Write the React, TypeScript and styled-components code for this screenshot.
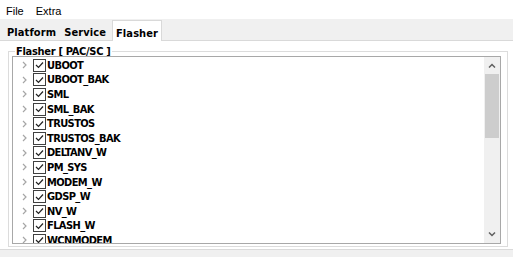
import styled, { createGlobalStyle } from "styled-components";

const Global = createGlobalStyle`
  html, body { margin: 0; padding: 0; background: #ffffff; }
  body { font-family: "DejaVu Sans", "Liberation Sans", sans-serif; color: #000; }
`

const Window = styled.div`
  width: 513px;
  height: 257px;
  overflow: hidden;
  display: flex;
  flex-direction: column;
  background: #f0f0f0;
`
const MenuBar = styled.div`
  height: 19px;
  box-sizing: border-box;
  padding: 3px 0 0 6px;
  display: flex;
  align-items: center;
  gap: 12px;
  background: #ffffff;
  font-family: "Liberation Sans", sans-serif;
  font-size: 11px;
`
const TabStrip = styled.div`
  height: 21px;
  display: flex;
  align-items: flex-end;
  padding-left: 3px;
  background: #f0f0f0;
`
const Tab = styled.div<{ active?: boolean }>`
  height: ${p => (p.active ? "21px" : "19px")};
  box-sizing: border-box;
  padding: ${p => (p.active ? "4px" : "2px")} 3px 0;
  display: flex;
  align-items: center;
  font-family: "DejaVu Sans Condensed", "DejaVu Sans", sans-serif;
  font-weight: bold;
  font-size: 11px;
  letter-spacing: 0.1px;
  background: ${p => (p.active ? "#ffffff" : "#f0f0f0")};
  border: 1px solid ${p => (p.active ? "#d9d9d9" : "transparent")};
  border-bottom: none;
  margin-bottom: ${p => (p.active ? "-1px" : "0")};
  margin-left: ${p => (p.active ? "2px" : "0")};
  position: relative;
`
const Panel = styled.div`
  height: 209px;
  box-sizing: border-box;
  background: #ffffff;
  border-top: 1px solid #d9d9d9;
  padding: 6px 5px 2px 8px;
  display: flex;
`
const Group = styled.fieldset`
  flex: 1;
  margin: 0;
  padding: 0 6px 2px 3px;
  border: 1px solid #dcdcdc;
  display: flex;
  min-width: 0;
`
const Legend = styled.legend`
  padding: 0 1px;
  margin-left: 3px;
  font-family: "DejaVu Sans Condensed", "DejaVu Sans", sans-serif;
  font-weight: bold;
  font-size: 11px;
  letter-spacing: -0.3px;
  line-height: 9px;
`
const ListBox = styled.div`
  flex: 1;
  display: flex;
  border: 1px solid #a8a8a8;
  background: #ffffff;
  overflow: hidden;
`
const Items = styled.div`
  flex: 1;
  padding: 1px 0 0 7px;
  overflow: hidden;
`
const Row = styled.div`
  height: 14.6px;
  display: flex;
  align-items: center;
  gap: 4px;
`
const Arrow = styled.span`
  width: 8px;
  display: flex;
  justify-content: center;
`
const Check = styled.span`
  width: 11px;
  height: 11px;
  border: 1px solid #404040;
  display: flex;
  align-items: center;
  justify-content: center;
  margin-left: 1px;
  margin-right: -3px;
`
const Label = styled.span`
  font-family: "DejaVu Sans Condensed", "DejaVu Sans", sans-serif;
  font-weight: bold;
  font-size: 11px;
  letter-spacing: -0.6px;
`
const ScrollBar = styled.div`
  width: 16px;
  background: #f0f0f0;
  display: flex;
  flex-direction: column;
  align-items: center;
`
const ScrollBtn = styled.div`
  height: 17px;
  width: 16px;
  display: flex;
  align-items: center;
  justify-content: center;
`
const Thumb = styled.div`
  width: 14px;
  height: 64px;
  background: #cdcdcd;
`
const Spacer = styled.div`
  flex: 1;
`
const StatusBar = styled.div`
  flex: 1;
  background: #f0f0f0;
  border-top: 1px solid #dadada;
`

const items = [
  "UBOOT", "UBOOT_BAK", "SML", "SML_BAK", "TRUSTOS", "TRUSTOS_BAK",
  "DELTANV_W", "PM_SYS", "MODEM_W", "GDSP_W", "NV_W", "FLASH_W", "WCNMODEM",
]

export default function App() {
  return (
    <Window>
      <Global />
      <MenuBar>
        <span>File</span>
        <span>Extra</span>
      </MenuBar>
      <TabStrip>
        <Tab>Platform</Tab>
        <Tab>Service</Tab>
        <Tab active>Flasher</Tab>
      </TabStrip>
      <Panel>
        <Group>
          <Legend>Flasher [ PAC/SC ]</Legend>
          <ListBox>
            <Items>
              {items.map(name => (
                <Row key={name}>
                  <Arrow>
                    <svg width="5" height="8" viewBox="0 0 5 8">
                      <path d="M1 1 L4 4 L1 7" fill="none" stroke="#a6a6a6" strokeWidth="1.2" />
                    </svg>
                  </Arrow>
                  <Check>
                    <svg width="9" height="8" viewBox="0 0 9 8">
                      <path d="M1 4 L3.5 6.5 L8 1.5" fill="none" stroke="#222" strokeWidth="1.2" />
                    </svg>
                  </Check>
                  <Label>{name}</Label>
                </Row>
              ))}
            </Items>
            <ScrollBar>
              <ScrollBtn>
                <svg width="8" height="5" viewBox="0 0 8 5">
                  <path d="M1 4.5 L4 1.5 L7 4.5" fill="none" stroke="#606060" strokeWidth="1.5" />
                </svg>
              </ScrollBtn>
              <Thumb />
              <Spacer />
              <ScrollBtn>
                <svg width="8" height="5" viewBox="0 0 8 5">
                  <path d="M1 0.5 L4 3.5 L7 0.5" fill="none" stroke="#606060" strokeWidth="1.5" />
                </svg>
              </ScrollBtn>
            </ScrollBar>
          </ListBox>
        </Group>
      </Panel>
      <StatusBar />
    </Window>
  )
}
